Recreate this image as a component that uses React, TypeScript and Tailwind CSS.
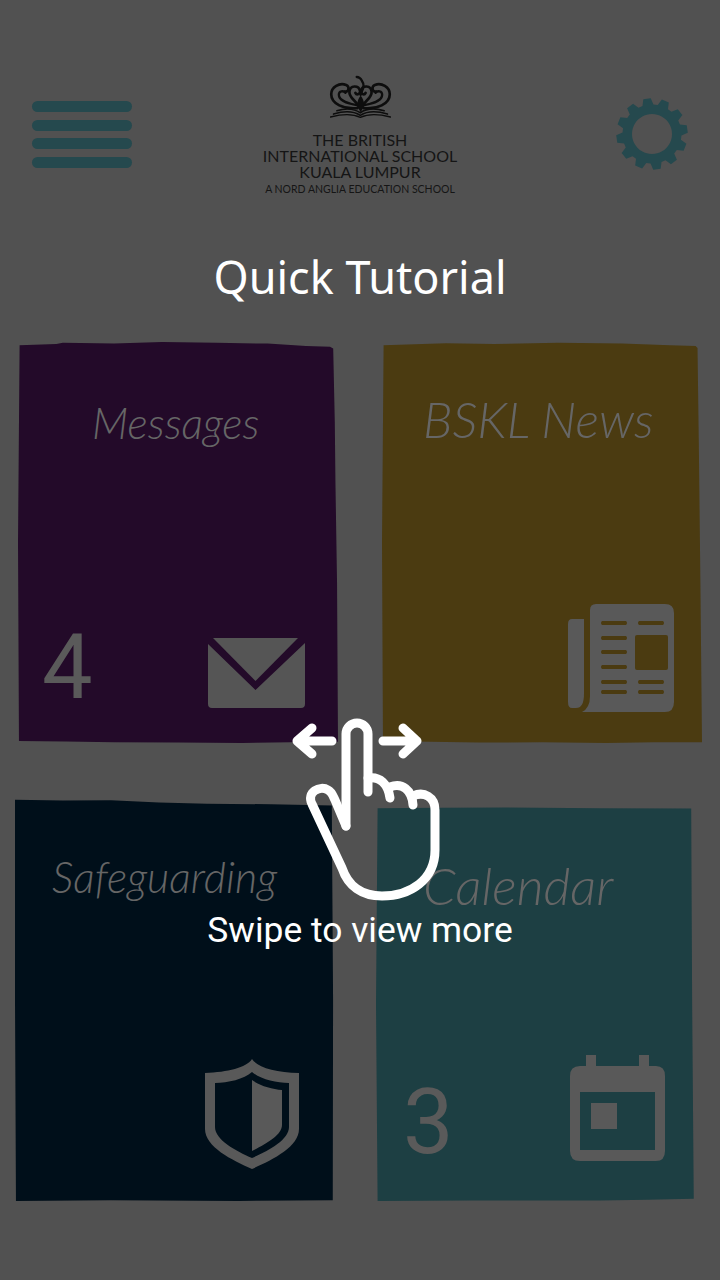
const gearPath = (() => {
  const cx = 50;
  const cy = 50;
  const teeth = 12;
  const pts: string[] = [];
  for (let i = 0; i < teeth; i++) {
    const a = ((i * 360) / teeth - 8) * (Math.PI / 180);
    const step = (Math.PI * 2) / teeth;
    const pt = (r: number, t: number) => `${(cx + r * Math.cos(a + t)).toFixed(2)} ${(cy + r * Math.sin(a + t)).toFixed(2)}`;
    pts.push(pt(29.5, -step * 0.36), pt(35.8, -step * 0.2), pt(35.8, step * 0.2), pt(29.5, step * 0.36));
  }
  return `M${pts.join("L")}Z M50 30a20 20 0 1 0 .01 0Z`;
})();

function Hamburger() {
  return (
    <div className="flex w-[100px] flex-col gap-[7.5px]">
      <div className="h-[11px] rounded-full bg-[#25494e]" />
      <div className="h-[11px] rounded-full bg-[#25494e]" />
      <div className="h-[11px] rounded-full bg-[#25494e]" />
      <div className="h-[11px] rounded-full bg-[#25494e]" />
    </div>
  );
}

function CrestHalf() {
  return (
    <>
      <path strokeWidth="8" d="M84 100C44 104 5 88 5 58C5 36 30 22 50 30C62 36 58 52 46 50" />
      <path strokeWidth="7" d="M86 92C60 88 28 78 28 60C28 48 42 46 48 54" />
      <path strokeWidth="8" d="M90 98C82 78 58 70 60 50C62 30 88 30 92 48C94 58 82 62 78 54" />
    </>
  );
}

function Crest() {
  return (
    <svg viewBox="0 0 187 130" className="h-[43px] w-[63px]" fill="none" stroke="#0d0d0d" strokeLinecap="round">
      <CrestHalf />
      <g transform="matrix(-1 0 0 1 187 0)">
        <CrestHalf />
      </g>
      <path strokeWidth="7" d="M94 60C100 42 108 32 98 18C94 10 88 6 82 6" />
      <path fill="#0d0d0d" stroke="none" d="M94 62C106 78 108 92 94 112C80 92 82 78 94 62Z" />
      <path strokeWidth="5" d="M22 108C48 100 76 102 93 114C110 102 138 100 165 108" />
      <path strokeWidth="5" d="M12 118C44 108 74 110 93 122C112 110 142 108 175 118" />
      <path strokeWidth="4" d="M3 127C38 118 72 118 93 128C114 118 150 118 184 127" />
    </svg>
  );
}

function Logo() {
  return (
    <div className="flex w-[200px] flex-col items-center font-['Lato',sans-serif] text-[#151515]">
      <Crest />
      <div className="mt-[14px] text-center text-[16px] leading-[16px] whitespace-nowrap">
        <p>THE BRITISH</p>
        <p>INTERNATIONAL SCHOOL</p>
        <p>KUALA LUMPUR</p>
      </div>
      <p className="mt-[3px] text-[10.5px] leading-[13px] whitespace-nowrap">A NORD ANGLIA EDUCATION SCHOOL</p>
    </div>
  );
}

function Gear() {
  return (
    <svg viewBox="0 0 100 100" className="h-[100px] w-[100px]">
      <path d={gearPath} fill="#25494e" fillRule="evenodd" />
    </svg>
  );
}

function Envelope() {
  return (
    <svg viewBox="0 0 97 70" className="h-[70px] w-[97px]" fill="#555555">
      <path d="M5 0H90L47.5 43Z" />
      <path d="M0 6L47.5 52L97 5V66Q97 70 93 70H4Q0 70 0 66Z" />
    </svg>
  );
}

function Newspaper() {
  return (
    <svg viewBox="0 0 108 108" className="h-[108px] w-[108px]" fill="#595959">
      <path d="M5 15H17V90Q17 104 9 104H5Q1 104 1 98V20Q1 15 5 15Z" />
      <path
        fillRule="evenodd"
        d="M29 0H98Q107 0 107 9V98Q107 108 98 108H15Q23 104 23 92V6Q23 0 29 0ZM35 17Q33 19 35 21H59Q61 19 59 17ZM72 17Q70 19 72 21H96Q98 19 96 17ZM35 32Q33 34 35 36H59Q61 34 59 32ZM68 33V64Q68 66 70 66H99Q101 66 101 64V33Q101 31 99 31H70Q68 31 68 33ZM35 46Q33 48 35 50H59Q61 48 59 46ZM35 61Q33 63 35 65H59Q61 63 59 61ZM35 76Q33 78 35 80H59Q61 78 59 76ZM72 76Q70 78 72 80H96Q98 78 96 76ZM35 86Q33 88 35 90H59Q61 88 59 86ZM72 86Q70 88 72 90H96Q98 88 96 86Z"
      />
    </svg>
  );
}

function Shield() {
  return (
    <svg viewBox="0 0 96 110" className="h-[110px] w-[96px]" fill="#595959">
      <path
        fillRule="evenodd"
        d="M48 0C54 9 72 13 95 14V70C95 88 68 101 48 110C28 101 1 88 1 70V14C24 13 42 9 48 0ZM48 13C40 20 24 24 11 24V68C11 81 32 92 48 99C64 92 85 81 85 68V24C72 24 56 20 48 13Z"
      />
      <path d="M48 21C56 27 68 30 78 31V66C78 76 62 85 48 92Z" />
    </svg>
  );
}

function CalendarIcon() {
  return (
    <svg viewBox="0 0 96 106" className="h-[106px] w-[96px]" fill="#595959">
      <path
        fillRule="evenodd"
        d="M16 0H26V11H69V0H79V11H86Q95 11 95 21V96Q95 106 86 106H10Q0 106 0 96V21Q0 11 10 11H16ZM10 37V95H85V37Z"
      />
      <rect x="21" y="48" width="26" height="26" />
    </svg>
  );
}

function Card({
  title,
  count,
  icon,
  className,
  titleClass,
  rowClass,
  countClass,
}: {
  title: string;
  count?: string;
  icon: React.ReactNode;
  className: string;
  titleClass: string;
  rowClass: string;
  countClass?: string;
}) {
  return (
    <div className={`flex w-[320px] shrink-0 flex-col justify-between ${className}`}>
      <p className={`font-['Lato',sans-serif] leading-[60px] font-light whitespace-nowrap text-[#666666] italic ${titleClass}`}>{title}</p>
      <div className={`flex items-end justify-between ${rowClass}`}>
        <span className={`font-['Roboto',sans-serif] text-[90px] leading-[88px] text-[#5a5a5a] ${countClass ?? ""}`}>{count}</span>
        {icon}
      </div>
    </div>
  );
}

export default function App() {
  return (
    <div className="relative flex h-[1280px] w-[720px] flex-col overflow-hidden bg-[#515151]">
      <header className="flex items-start justify-between pt-[75px] pr-[18px] pl-[32px]">
        <div className="pt-[26px]">
          <Hamburger />
        </div>
        <div className="-ml-[14px]">
          <Logo />
        </div>
        <div className="pt-[9px]">
          <Gear />
        </div>
      </header>

      <h1 className="mt-[50px] text-center font-['Noto_Sans',sans-serif] text-[45px] leading-[62px] text-white">Quick Tutorial</h1>

      <div className="mt-[34px] flex flex-col">
        <div className="flex pl-[18px]">
          <Card
            title="Messages"
            count="4"
            icon={<Envelope />}
            className="h-[401px] bg-[#230a29] [clip-path:polygon(0.5%_0.8%,12%_0.5%,14%_0.2%,30%_0.4%,45%_0%,62%_0.2%,78%_0.4%,90%_1%,97.5%_1.2%,98.5%_1.6%,99%_20%,99.2%_35%,99.7%_60%,100%_99.7%,85%_99.8%,70%_100%,50%_99.9%,30%_99.8%,15%_99.6%,0.3%_99.5%,0%_50%)]"
            titleClass="mt-[51px] pl-[74px] text-[43px]"
            rowClass="pb-[35px] pr-[33px] pl-[24px]"
            countClass="-mb-[4px]"
          />
          <Card
            title="BSKL News"
            icon={<Newspaper />}
            className="ml-[44px] h-[401px] bg-[#4b3b11] [clip-path:polygon(0.5%_0.8%,20%_0.3%,35%_0.5%,55%_0.2%,75%_0.4%,90%_0.8%,98%_1%,98.6%_1.5%,99%_25%,99.5%_60%,100%_99.8%,85%_99.8%,70%_100%,50%_99.8%,30%_99.9%,10%_99.6%,0.3%_99.6%,0%_50%)]"
            titleClass="mt-[47px] pl-[41px] text-[50px]"
            rowClass="pb-[31px] pr-[27px]"
          />
        </div>
        <div className="mt-[56px] flex pl-[15px]">
          <Card
            title="Safeguarding"
            icon={<Shield />}
            className="h-[402px] bg-[#000f1a] [clip-path:polygon(0%_0.2%,15%_0.4%,30%_0.3%,45%_0.9%,60%_1.2%,80%_1.3%,99%_1.6%,99.4%_50%,99.3%_99.8%,70%_100%,30%_99.8%,0.3%_100%,0%_50%)]"
            titleClass="mt-[48px] pl-[37px] text-[43px]"
            rowClass="pb-[32px] pr-[35px]"
          />
          <Card
            title="Calendar"
            count="3"
            icon={<CalendarIcon />}
            className="mt-[8px] ml-[41px] h-[394px] bg-[#1d3f43] [clip-path:polygon(0.5%_0.3%,20%_0.2%,40%_0.1%,70%_0.3%,98.5%_0.4%,98.8%_50%,99.3%_99.4%,85%_99.7%,70%_99.9%,30%_99.9%,0.5%_100%,0%_50%)]"
            titleClass="mt-[48px] pl-[47px] text-[52px]"
            rowClass="pb-[40px] pr-[30px] pl-[27px]"
            countClass="-mb-[6px]"
          />
        </div>
      </div>

      {/* swipe hint sits over the cards */}
      <div className="absolute top-[700px] left-[270px] h-[210px] w-[190px]">
        <svg viewBox="0 0 190 210" className="h-[210px] w-[190px]" fill="none" stroke="#ffffff" strokeWidth="9" strokeLinecap="round" strokeLinejoin="round">
          <path d="M62 41H27M42 28L27 41L42 54" />
          <path d="M113 41H147M133 28L147 41L133 54" />
          <path d="M76 126V34A11 11 0 0 1 98 34V92" />
          <path d="M98 78C110 76 118 84 120 98" />
          <path d="M120 87C132 82 142 90 143 105" />
          <path d="M143 96C154 91 165 97 165 110V150C165 180 140 196 112 196C92 196 78 186 72 168L42 104C36 92 50 85 58 90C62 92 63 96 65 100L76 126" />
        </svg>
      </div>
      <p className="absolute top-[908px] right-0 left-0 text-center font-['Roboto',sans-serif] text-[35.4px] leading-[44px] text-white">Swipe to view more</p>
    </div>
  );
}
